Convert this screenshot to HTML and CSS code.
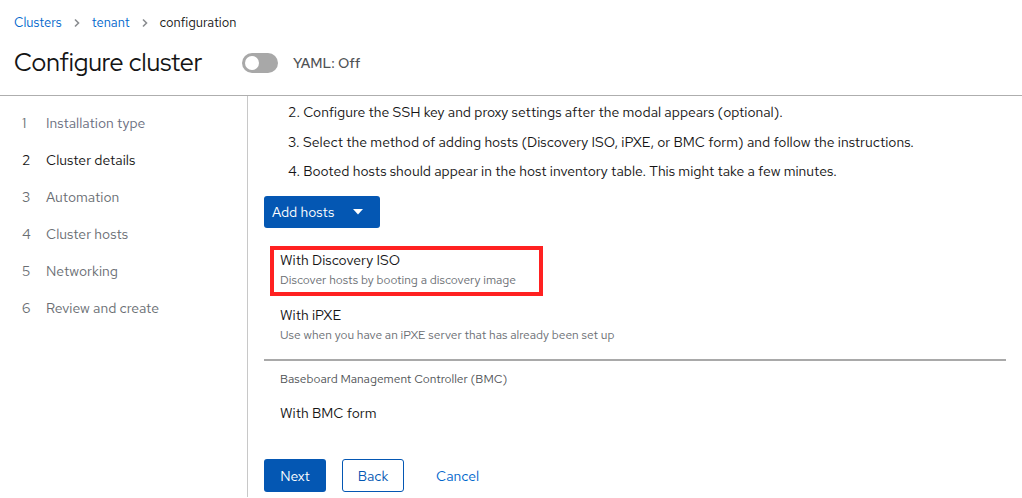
FILE: index.html
```html
<!DOCTYPE html>
<html>
<head>
<meta charset="utf-8">
<link rel="stylesheet" href="styles.css">
</head>
<body>
<header class="page-header">
  <nav class="breadcrumb">
    <a class="crumb link">Clusters</a>
    <span class="sep"><svg width="8" height="10" viewBox="0 0 8 10"><path d="M2 1.5 L5.5 5 L2 8.5" fill="none" stroke="#8a8d90" stroke-width="1.6"/></svg></span>
    <a class="crumb link">tenant</a>
    <span class="sep"><svg width="8" height="10" viewBox="0 0 8 10"><path d="M2 1.5 L5.5 5 L2 8.5" fill="none" stroke="#8a8d90" stroke-width="1.6"/></svg></span>
    <span class="crumb current">configuration</span>
  </nav>
  <div class="title-row">
    <h1 class="title">Configure cluster</h1>
    <span class="switch"><span class="knob"></span></span>
    <span class="switch-label">YAML: Off</span>
  </div>
</header>
<div class="wizard">
  <nav class="wizard-nav">
    <div class="step visited"><span class="num">1</span><span class="label">Installation type</span></div>
    <div class="step active"><span class="num">2</span><span class="label">Cluster details</span></div>
    <div class="step"><span class="num">3</span><span class="label">Automation</span></div>
    <div class="step"><span class="num">4</span><span class="label">Cluster hosts</span></div>
    <div class="step"><span class="num">5</span><span class="label">Networking</span></div>
    <div class="step"><span class="num">6</span><span class="label">Review and create</span></div>
  </nav>
  <main class="wizard-main">
    <div class="body">
      <div class="instructions">
        <p>2. Configure the SSH key and proxy settings after the modal appears (optional).</p>
        <p>3. Select the method of adding hosts (Discovery ISO, iPXE, or BMC form) and follow the instructions.</p>
        <p>4. Booted hosts should appear in the host inventory table. This might take a few minutes.</p>
      </div>
      <button class="dropdown-toggle">Add hosts <svg class="caret" width="10" height="6" viewBox="0 0 10 6"><path d="M0 0 H10 L5 5.5 Z" fill="#fff"/></svg></button>
      <div class="menu">
        <div class="menu-item highlighted">
          <div class="item-title">With Discovery ISO</div>
          <div class="item-desc">Discover hosts by booting a discovery image</div>
        </div>
        <div class="menu-item">
          <div class="item-title">With iPXE</div>
          <div class="item-desc">Use when you have an iPXE server that has already been set up</div>
        </div>
        <hr class="divider">
        <div class="group-title">Baseboard Management Controller (BMC)</div>
        <div class="menu-item">
          <div class="item-title">With BMC form</div>
        </div>
      </div>
    </div>
    <footer class="footer">
      <button class="btn primary">Next</button>
      <button class="btn secondary">Back</button>
      <button class="btn link-btn">Cancel</button>
    </footer>
  </main>
</div>
</body>
</html>
```

FILE: styles.css
```css
*, *::before, *::after { box-sizing: border-box; }
html, body { margin: 0; padding: 0; background: #fff; }
body {
  font-family: "Red Hat Text", "Noto Sans", "Open Sans", sans-serif;
  font-size: 14px;
  color: #151515;
  width: 1022px;
  height: 498px;
  overflow: hidden;
}
.page-header { padding: 13px 14px 0 14px; }
.breadcrumb { display: flex; align-items: center; font-size: 13px; line-height: 20px; }
.crumb.link { color: #0066cc; }
.crumb.current { color: #151515; }
.sep { display: inline-flex; align-items: center; margin: 0 11px 0 11px; }
.title-row { display: flex; align-items: center; height: 42px; margin-top: 9px; }
.title {
  margin: 0;
  font-family: "Red Hat Display", "Noto Sans", sans-serif;
  font-weight: 400;
  font-size: 24.8px;
  line-height: 30px;
  width: 228px;
}
.switch {
  width: 36px; height: 20px; border-radius: 10px; background: #a8a8a8;
  display: inline-flex; align-items: center; padding-left: 3px;
}
.knob { width: 14px; height: 14px; border-radius: 50%; background: #fff; }
.switch-label { margin-left: 15px; color: #4f5255; font-weight: 500; font-size: 14px; }
.wizard {
  display: flex;
  border-top: 1px solid #aeaeae;
  margin-top: 11px;
  height: 402px;
}
.wizard-nav {
  width: 248px;
  flex: none;
  border-right: 1px solid #c8c8c8;
  padding: 9px 0;
}
.step { display: flex; line-height: 21px; padding: 8px 0 8px 22px; color: #6a6e73; }
.step .num { width: 24px; }
.step.visited .label { color: #6a6e80; }
.step.active { color: #151515; }
.wizard-main { flex: 1; display: flex; flex-direction: column; padding: 0 16px 0 16px; }
.body { flex: 1; }
.instructions { padding: 6px 0 0 24px; }
.instructions p { margin: 0 0 8.5px 0; line-height: 21px; }
.dropdown-toggle {
  margin-top: 14px;
  width: 116px; height: 32px;
  background: #0457b3; color: #fff; border: none; border-radius: 3px;
  font: inherit; font-size: 14px; text-align: left; padding: 0 8px;
  display: flex; align-items: center;
}
.caret { margin-left: 19px; }
.menu { width: 742px; padding: 8px 0; margin-top: 5.5px; }
.menu-item { position: relative; padding: 8px 16px; }
.item-title { line-height: 21px; }
.item-desc { font-size: 12px; line-height: 18px; color: #6a6e73; }
.menu-item.highlighted::after {
  content: "";
  position: absolute;
  left: 6px; top: 4px; width: 273px; height: 50px;
  border: 4px solid #ff2121;
}
.divider { border: none; border-top: 2px solid #a9a9a9; margin: 7px 0 0 0; }
.group-title { font-size: 12px; line-height: 18px; color: #4f5255; padding: 9px 16px 7px; }
.footer { display: flex; align-items: center; gap: 16px; padding-bottom: 5px; }
.btn { font: inherit; font-size: 14px; height: 33px; border-radius: 3px; padding: 0 14px; background: none; border: none; }
.btn.primary { background: #0457b3; color: #fff; width: 62px; }
.btn.secondary { border: 1px solid #0457b3; color: #0457b3; width: 62px; }
.btn.link-btn { color: #0066cc; margin-left: 2px; }
```
